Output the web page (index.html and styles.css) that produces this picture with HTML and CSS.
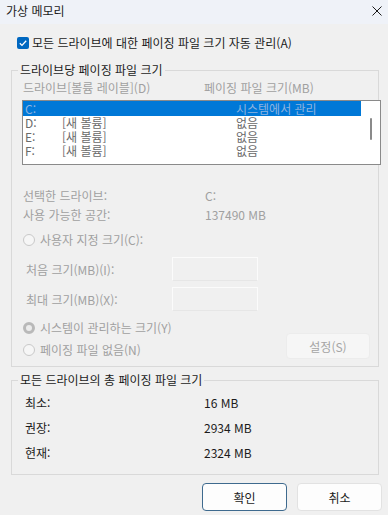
FILE: index.html
```html
<!DOCTYPE html>
<html lang="ko">

<head>
  <meta charset="UTF-8">
  <meta name="viewport" content="width=device-width, initial-scale=1.0">
  <title>가상 메모리</title>
  <link rel="stylesheet" href="styles.css">
</head>

<body>
  <div class="window">
    <header class="titlebar">
      <span class="title">가상 메모리</span>
      <svg class="close" width="10" height="10" viewBox="0 0 10 10">
        <path d="M0.5 0.5 L9.5 9.5 M9.5 0.5 L0.5 9.5" stroke="#1b1b1b" stroke-width="1" fill="none" />
      </svg>
    </header>

    <main class="content">
      <label class="auto">
        <span class="check">
          <svg width="12" height="12" viewBox="0 0 12 12">
            <path d="M2.8 6.2 L5 8.4 L9.2 3.8" stroke="#fff" stroke-width="1.3" fill="none" />
          </svg>
        </span>
        모든 드라이브에 대한 페이징 파일 크기 자동 관리(A)
      </label>

      <fieldset class="group per-drive">
        <legend>드라이브당 페이징 파일 크기</legend>

        <div class="list-head">
          <span>드라이브[볼륨 레이블](D)</span>
          <span>페이징 파일 크기(MB)</span>
        </div>

        <div class="listbox">
          <ul class="rows">
            <li class="row selected"><span class="drv">C:</span><span class="vol"></span><span class="size">시스템에서 관리</span></li>
            <li class="row"><span class="drv">D:</span><span class="vol">[새 볼륨]</span><span class="size">없음</span></li>
            <li class="row"><span class="drv">E:</span><span class="vol">[새 볼륨]</span><span class="size">없음</span></li>
            <li class="row"><span class="drv">F:</span><span class="vol">[새 볼륨]</span><span class="size">없음</span></li>
          </ul>
          <div class="scroll"><span class="thumb"></span></div>
        </div>

        <div class="info">
          <span>선택한 드라이브:</span><span>C:</span>
          <span>사용 가능한 공간:</span><span>137490 MB</span>
        </div>

        <label class="radio custom"><span class="dot"></span>사용자 지정 크기(C):</label>

        <div class="field first">
          <span class="field-label">처음 크기(MB)(I):</span>
          <span class="input"></span>
        </div>
        <div class="field">
          <span class="field-label">최대 크기(MB)(X):</span>
          <span class="input"></span>
        </div>

        <div class="choices">
          <div class="choice-list">
            <label class="radio"><span class="dot on"></span>시스템이 관리하는 크기(Y)</label>
            <label class="radio"><span class="dot"></span>페이징 파일 없음(N)</label>
          </div>
          <button class="btn set" disabled>설정(S)</button>
        </div>
      </fieldset>

      <fieldset class="group totals">
        <legend>모든 드라이브의 총 페이징 파일 크기</legend>
        <div class="total-grid">
          <span>최소:</span><span>16 MB</span>
          <span>권장:</span><span>2934 MB</span>
          <span>현재:</span><span>2324 MB</span>
        </div>
      </fieldset>

      <div class="actions">
        <button class="btn primary">확인</button>
        <button class="btn">취소</button>
      </div>
    </main>
  </div>
</body>

</html>
```

FILE: styles.css
```css
html {
  box-sizing: border-box;
  font-family: 'Noto Sans CJK KR', 'Noto Sans', sans-serif;
  font-size: 12px;
}

*,
*:after,
*:before {
  box-sizing: inherit;
}

body {
  margin: 0;
  background-color: #f0f0f0;
  color: #1b1b1b;
}

.window {
  width: 388px;
  height: 515px;
  overflow: hidden;
}

.titlebar {
  height: 24px;
  padding: 0 6px 2px 6px;
  display: flex;
  align-items: center;
  justify-content: space-between;
  background-color: #eff2f8;
  line-height: 16px;
}

.content {
  padding: 0 9px 0 11px;
}

.auto {
  margin: 10px 0 0 6px;
  height: 18px;
  line-height: 18px;
  display: flex;
  align-items: center;
  gap: 3px;
}

.check {
  width: 12px;
  height: 12px;
  border-radius: 2px;
  background-color: #0067c0;
  display: flex;
}

.group {
  margin: 10px 0 0 0;
  padding: 0 0 0 10px;
  border: 1px solid #d9d9d9;
  min-width: 0;
}

.group legend {
  margin-left: -4px;
  padding: 0 2px;
  line-height: 16px;
  color: #1b1b1b;
}

.per-drive {
  padding-bottom: 7px;
}

.list-head {
  margin-top: 2px;
  padding-left: 1px;
  display: grid;
  grid-template-columns: 181px 1fr;
  line-height: 16px;
  color: #a0a0a0;
}

.listbox {
  margin: 4px -3px 0 0;
  height: 65px;
  border: 1px solid #8a8a8a;
  background-color: #fff;
  display: flex;
  overflow: hidden;
}

.rows {
  list-style: none;
  margin: 0;
  padding: 0;
  width: 338px;
}

.row {
  display: flex;
  height: 14px;
  line-height: 14px;
  color: #6a6a6a;
  white-space: nowrap;
}

.row.selected {
  height: 15px;
  line-height: 15px;
  background-color: #0078d7;
  color: #8fb3df;
}

.drv {
  width: 39px;
  padding-left: 2px;
}

.vol {
  width: 174px;
}

.scroll {
  flex: 1;
  display: flex;
  justify-content: center;
  padding: 17px 0 0 0;
}

.thumb {
  width: 2px;
  height: 22px;
  border-radius: 1px;
  background-color: #8a8a8a;
}

.info {
  margin-top: 21px;
  padding-left: 1px;
  display: grid;
  grid-template-columns: 182px 1fr;
  grid-auto-rows: 19px;
  line-height: 19px;
  color: #a0a0a0;
}

.radio {
  height: 18px;
  line-height: 18px;
  display: flex;
  align-items: center;
  gap: 5px;
  padding-left: 1px;
  color: #a0a0a0;
}

.custom {
  margin-top: 7px;
}

.dot {
  width: 12px;
  height: 12px;
  border-radius: 50%;
  border: 1px solid #c9c9c9;
  background-color: #f6f6f6;
}

.dot.on {
  border: 3.5px solid #b9b9b9;
  background-color: #ececec;
}

.field {
  margin-top: 6px;
  padding-left: 4px;
  display: flex;
  align-items: center;
  height: 24px;
  color: #a0a0a0;
}

.field.first {
  margin-top: 8px;
}

.field-label {
  width: 146px;
}

.input {
  width: 86px;
  height: 24px;
  border: 1px solid #fbfbfb;
  border-bottom-color: #e6e6e6;
}

.choices {
  margin-top: 8px;
  display: flex;
  align-items: flex-end;
  justify-content: space-between;
  padding-right: 8px;
}

.choice-list {
  display: flex;
  flex-direction: column;
  gap: 4px;
}

.btn {
  font-family: inherit;
  font-size: 12px;
  width: 85px;
  height: 28px;
  border: 1px solid #e2e2e2;
  border-radius: 4px;
  background-color: #fdfdfd;
  color: #1b1b1b;
  padding: 0;
}

.btn.set {
  width: 84px;
  height: 26px;
  background-color: #f6f6f6;
  border-color: #ececec;
  color: #a5a5a5;
}

.btn.primary {
  border-color: #3e6a8e;
}

.totals {
  margin-top: 5px;
  padding-bottom: 9px;
}

.total-grid {
  margin-top: 2px;
  padding-left: 3px;
  display: grid;
  grid-template-columns: 179px 1fr;
  grid-auto-rows: 25px;
  line-height: 25px;
}

.actions {
  margin: 8px -3px 0 0;
  display: flex;
  justify-content: flex-end;
  gap: 10px;
}
```
